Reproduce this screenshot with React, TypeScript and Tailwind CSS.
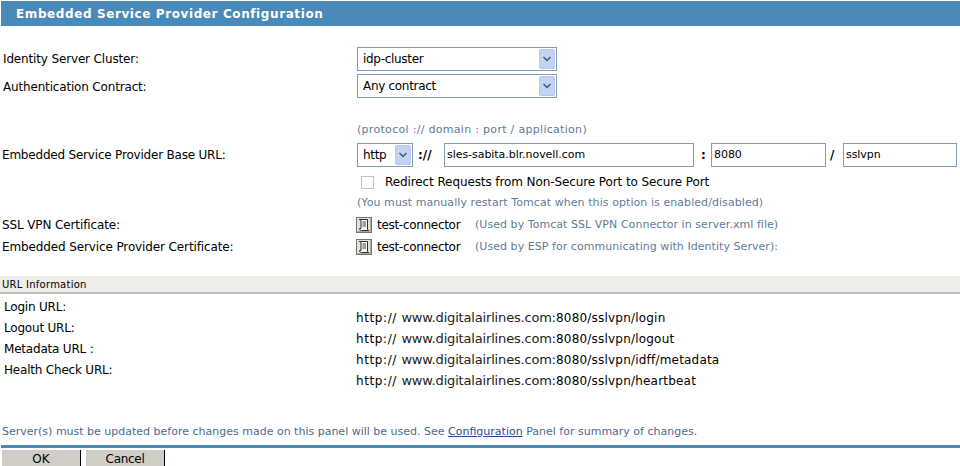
import { ChevronDown } from "lucide-react";

const font = "font-['DejaVu_Sans','Liberation_Sans',sans-serif]";

function FakeSelect({ value, width }: { value: string; width: string }) {
  return (
    <div className={`flex items-center justify-between h-[24px] border border-[#7f9db9] bg-white pl-[5px] pr-[1px] ${width}`}>
      <span className="text-[12px] leading-none text-black tracking-[-0.3px]">{value}</span>
      <span className="flex items-center justify-center w-[16px] h-[20px] rounded-[2px] bg-[#c3d3f5] border border-[#b4c6ee]">
        <ChevronDown className="w-[12px] h-[12px] text-[#4d6185]" strokeWidth={3.5} />
      </span>
    </div>
  );
}

function TextBox({ value, width }: { value: string; width: string }) {
  return (
    <div className={`flex items-center h-[24px] border border-[#7f9db9] bg-white pl-[2px] text-[11px] tracking-[-0.05px] text-black ${width}`}>
      {value}
    </div>
  );
}

function CertIcon() {
  return (
    <svg width="16" height="16" viewBox="0 0 16 16" className="shrink-0">
      <rect x="0.5" y="0.5" width="15" height="15" fill="#e4e2da" stroke="#77776f" />
      <path d="M14.5 1.5v13h-13" fill="none" stroke="#a8a79f" />
      <path d="M3 2.5h8.5v9.5c0 .8.5 1.5 1.5 1.5H5.5c-1 0-2-.6-2-1.5v-.5h1.5V4C5 3.2 4 2.5 3 2.5z" fill="#f8f8ef" stroke="#2f2f2f" />
      <path d="M6.5 5h3.5M6.5 7h3.5M6.5 9h3.5" stroke="#444" />
    </svg>
  );
}

function CertRow({ label, hint }: { label: string; hint: string }) {
  return (
    <div className="flex items-center h-[22px]">
      <div className="w-[354px] text-[12px] tracking-[-0.12px]">{label}</div>
      <CertIcon />
      <span className="ml-[5px] w-[98px] text-[12px] tracking-[-0.3px]">test-connector</span>
      <span className="text-[11px] tracking-[0.05px] text-[#5f7a9b]">{hint}</span>
    </div>
  );
}

const loginLabels = ["Login URL:", "Logout URL:", "Metadata URL :", "Health Check URL:"];
const urlPaths = ["login", "logout", "idff/metadata", "heartbeat"];

export default function App() {
  return (
    <div className={`w-[960px] h-[466px] overflow-hidden bg-white text-black ${font}`}>
      {/* Title */}
      <div className="ml-[1px] mt-[1px] h-[25px] flex items-center bg-[#4a8ab9] pl-[15px] text-[12px] font-bold tracking-[0.6px] text-white">
        Embedded Service Provider Configuration
      </div>

      {/* Cluster and contract */}
      <div className="mt-[21px] pl-[3px]">
        <div className="flex items-center h-[24px]">
          <div className="w-[354px] text-[12px] tracking-[-0.15px]">Identity Server Cluster:</div>
          <FakeSelect value="idp-cluster" width="w-[200px]" />
        </div>
        <div className="flex items-center h-[24px] mt-[3px]">
          <div className="w-[354px] pt-[1px] text-[12px] tracking-[-0.17px]">Authentication Contract:</div>
          <FakeSelect value="Any contract" width="w-[200px]" />
        </div>
      </div>

      {/* Base URL */}
      <div className="pl-[357px] mt-[24px] h-[16px] flex items-center text-[11px] tracking-[0.3px] text-[#5f7a9b]">
        (protocol :// domain : port / application)
      </div>
      <div className="flex items-center h-[24px] mt-[5px] pl-[2px]">
        <div className="w-[355px] text-[12px] tracking-[-0.2px]">Embedded Service Provider Base URL:</div>
        <FakeSelect value="http" width="w-[56px]" />
        <span className="w-[31px] pl-[5px] text-[12px] font-bold">://</span>
        <TextBox value="sles-sabita.blr.novell.com" width="w-[250px]" />
        <span className="w-[17px] pl-[7px] text-[12px] font-bold">:</span>
        <TextBox value="8080" width="w-[115px]" />
        <span className="w-[17px] pl-[4px] text-[12px] font-bold">/</span>
        <TextBox value="sslvpn" width="w-[114px]" />
      </div>

      <div className="flex items-center h-[16px] mt-[7px] pl-[361px]">
        <span className="w-[13px] h-[13px] border border-[#c4c4bc] bg-white" />
        <span className="ml-[11px] text-[12px] tracking-[-0.1px]">Redirect Requests from Non-Secure Port to Secure Port</span>
      </div>
      <div className="pl-[357px] mt-[5px] h-[16px] flex items-center text-[11px] tracking-[0.07px] text-[#5f7a9b]">
        (You must manually restart Tomcat when this option is enabled/disabled)
      </div>

      <div className="mt-[3px] pl-[2px]">
        <CertRow label="SSL VPN Certificate:" hint="(Used by Tomcat SSL VPN Connector in server.xml file)" />
        <CertRow label="Embedded Service Provider Certificate:" hint="(Used by ESP for communicating with Identity Server):" />
      </div>

      {/* URL information */}
      <div className="mt-[18px] h-[18px] flex items-center bg-[#eeede8] border-b-2 border-[#bdbcb5] pl-[2px] text-[10px] tracking-[0.25px]">
        URL Information
      </div>
      <div className="flex mt-[2px] pl-[4px]">
        <div className="w-[352px] flex flex-col">
          {loginLabels.map((l) => (
            <div key={l} className="h-[21px] flex items-center text-[12px] tracking-[-0.2px]">{l}</div>
          ))}
        </div>
        <div className="mt-[11px] flex flex-col">
          {urlPaths.map((p) => (
            <div key={p} className="h-[21px] flex items-center text-[12px] whitespace-nowrap">
              <span className="tracking-[0.6px]">http://&nbsp;</span>
              <span className="text-[13px] tracking-[-0.17px] text-[#222]">www.digitalairlines.com</span>
              <span className="tracking-[0.2px]">:8080/sslvpn/{p}</span>
            </div>
          ))}
        </div>
      </div>

      {/* Footer */}
      <div className="mt-[33px] h-[16px] pl-[2px] flex items-center text-[11px] text-[#4c6a94]">
        <span>
          Server(s) must be updated before changes made on this panel will be used. See{" "}
          <span className="underline text-[#1f4f8f]">Configuration</span> Panel for summary of changes.
        </span>
      </div>
      <div className="mt-[5px] h-[3px] ml-[1px] bg-[#4a8ab9]" />
      <div className="mt-[2px] flex pl-[2px] gap-[5px]">
        <button className="w-[79px] h-[17px] bg-[#d0cdc6] border-r border-black text-[12px] leading-none">OK</button>
        <button className="w-[79px] h-[17px] bg-[#d0cdc6] border-r border-black text-[12px] tracking-[-0.3px] leading-none">Cancel</button>
      </div>
    </div>
  );
}
